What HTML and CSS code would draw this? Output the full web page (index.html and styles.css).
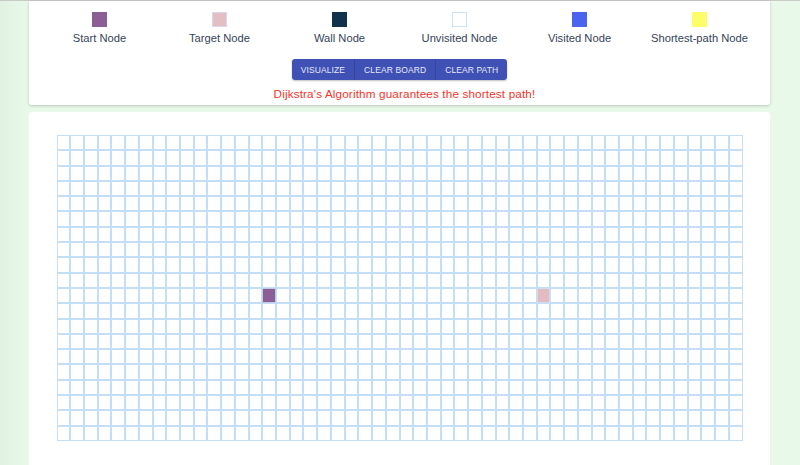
FILE: index.html
```html
<!DOCTYPE html>
<html lang="en">
<head>
<meta charset="utf-8">
<title>Pathfinding Visualizer</title>
<link rel="stylesheet" href="styles.css">
</head>
<body>
<div class="topline"></div>
<div class="page">
  <div class="card header">
    <ul class="legend">
      <li class="legend-item"><span class="swatch start"></span><span class="label">Start Node</span></li>
      <li class="legend-item"><span class="swatch target"></span><span class="label">Target Node</span></li>
      <li class="legend-item"><span class="swatch wall"></span><span class="label">Wall Node</span></li>
      <li class="legend-item"><span class="swatch unvisited"></span><span class="label">Unvisited Node</span></li>
      <li class="legend-item"><span class="swatch visited"></span><span class="label">Visited Node</span></li>
      <li class="legend-item"><span class="swatch path"></span><span class="label">Shortest-path Node</span></li>
    </ul>
    <div class="btn-group">
      <button class="btn">VISUALIZE</button>
      <button class="btn">CLEAR BOARD</button>
      <button class="btn">CLEAR PATH</button>
    </div>
    <p class="message">Dijkstra's Algorithm guarantees the shortest path!</p>
  </div>
  <div class="card board">
    <div class="grid" id="grid"></div>
  </div>
</div>
<script src="script.js"></script>
</body>
</html>
```

FILE: styles.css
```css
html, body {
  margin: 0;
  padding: 0;
}
body {
  background: linear-gradient(90deg, #e2f2e2 0px, #e9f9e9 28px, #e9f9e9 100%);
  font-family: "Liberation Sans", Arial, Helvetica, sans-serif;
  color: #2c3e50;
  height: 465px;
  overflow: hidden;
}
.topline {
  height: 1px;
  background: #c9c9c6;
}
.page {
  width: 741px;
  margin: 0 0 0 29px;
}
.card {
  background: #ffffff;
  border-radius: 3px;
}
.header {
  height: 104px;
  box-shadow: 0 1px 3px rgba(60, 80, 60, 0.28);
  display: flex;
  flex-direction: column;
  align-items: center;
  padding-top: 11px;
  box-sizing: border-box;
  border-radius: 0 0 3px 3px;
}
.legend {
  list-style: none;
  margin: 0;
  padding: 0;
  display: flex;
  width: 720px;
}
.legend-item {
  flex: 1;
  display: flex;
  flex-direction: column;
  align-items: center;
}
.swatch {
  width: 15px;
  height: 15px;
  box-sizing: border-box;
}
.swatch.start { background: #8b5f95; }
.swatch.target { background: #e3bec4; border: 1px solid #d6d9ee; }
.swatch.wall { background: #10324a; }
.swatch.unvisited { background: #fff; border: 1px solid #cfe3f7; }
.swatch.visited { background: #4a64f0; }
.swatch.path { background: #fdfd6a; }
.label {
  margin-top: 5px;
  font-size: 11.2px;
  line-height: 13px;
  color: #34445a;
}
.btn-group {
  margin-top: 14px;
  display: flex;
  height: 21px;
  border-radius: 3px;
  overflow: hidden;
  box-shadow: 0 1px 2px rgba(0, 0, 0, 0.25);
}
.btn {
  border: 0;
  margin: 0;
  background: #3f51b5;
  color: #e6e9f7;
  font-family: "Liberation Sans", Arial, sans-serif;
  font-size: 8.5px;
  letter-spacing: 0.1px;
  padding: 0 9px;
  height: 21px;
  border-left: 1px solid #364699;
}
.btn:first-child {
  border-left: 0;
}
.message {
  margin: 7px 0 0;
  padding-left: 10px;
  color: #f4352c;
  font-size: 11.7px;
  line-height: 14px;
  letter-spacing: 0.15px;
}
.board {
  margin-top: 7px;
  height: 353px;
  padding: 23px 0 0;
  box-sizing: border-box;
  display: flex;
  justify-content: center;
  align-items: flex-start;
  border-radius: 3px 3px 0 0;
}
.grid {
  width: 686px;
  display: grid;
  grid-template-columns: repeat(50, 1fr);
  grid-template-rows: repeat(20, 15.3px);
}
.node {
  border: 1px solid #c4def7;
  background: #fff;
}
.node.start { background: #8b5f95; border-color: #b9cde6; }
.node.target { background: #e3bcc2; border-color: #cfdcf0; }
```

FILE: script.js
```js
(function () {
  var grid = document.getElementById('grid');
  var html = '';
  for (var r = 0; r < 20; r++) {
    for (var c = 0; c < 50; c++) {
      var cls = 'node';
      if (r === 10 && c === 15) cls += ' start';
      if (r === 10 && c === 35) cls += ' target';
      html += '<div class="' + cls + '"></div>';
    }
  }
  grid.innerHTML = html;
})();
```
